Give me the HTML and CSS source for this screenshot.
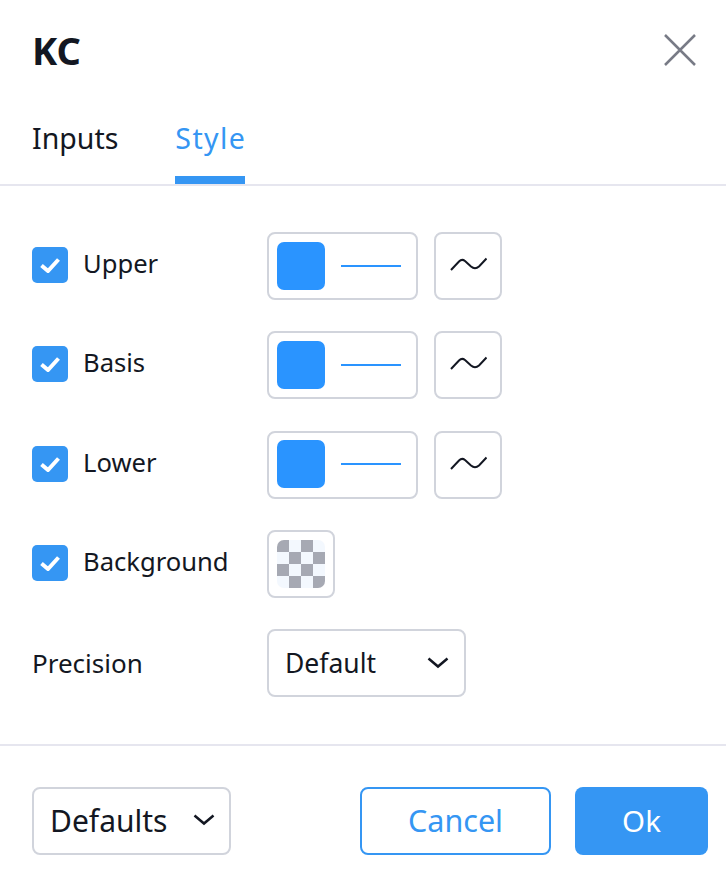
FILE: index.html
```html
<!DOCTYPE html>
<html lang="en">
  <head>
    <meta charset="UTF-8" />
    <meta name="viewport" content="width=device-width, initial-scale=1.0" />
    <title>KC</title>
    <link rel="stylesheet" href="styles.css">
  </head>

  <body>
    <div class="dialog">
      <div class="title-bar">
        <div class="title">KC</div>
        <svg class="close" width="34" height="34" viewBox="0 0 34 34">
          <path d="M2 2 L32 32 M32 2 L2 32" />
        </svg>
      </div>

      <div class="tabs">
        <div class="tab">Inputs</div>
        <div class="tab active">Style</div>
      </div>

      <div class="content">
        <div class="row">
          <div class="label-cell checked">
            <span class="checkbox"><svg width="20" height="16" viewBox="0 0 20 16"><path d="M1.500 8.500 L8 14 L18.500 2.500" /></svg></span>
            <span class="label">Upper</span>
          </div>
          <div class="swatch-button"><span class="color"></span><span class="line"></span></div>
          <div class="plot-button"><svg width="38" height="20" viewBox="0 0 38 20"><path d="M2 14 L10 5.500 Q13 2.500 16 5 L22 10.500 Q26 14 30 10.500 L37.500 2.500" /></svg></div>
        </div>
        <div class="row">
          <div class="label-cell checked">
            <span class="checkbox"><svg width="20" height="16" viewBox="0 0 20 16"><path d="M1.500 8.500 L8 14 L18.500 2.500" /></svg></span>
            <span class="label">Basis</span>
          </div>
          <div class="swatch-button"><span class="color"></span><span class="line"></span></div>
          <div class="plot-button"><svg width="38" height="20" viewBox="0 0 38 20"><path d="M2 14 L10 5.500 Q13 2.500 16 5 L22 10.500 Q26 14 30 10.500 L37.500 2.500" /></svg></div>
        </div>
        <div class="row">
          <div class="label-cell checked">
            <span class="checkbox"><svg width="20" height="16" viewBox="0 0 20 16"><path d="M1.500 8.500 L8 14 L18.500 2.500" /></svg></span>
            <span class="label">Lower</span>
          </div>
          <div class="swatch-button"><span class="color"></span><span class="line"></span></div>
          <div class="plot-button"><svg width="38" height="20" viewBox="0 0 38 20"><path d="M2 14 L10 5.500 Q13 2.500 16 5 L22 10.500 Q26 14 30 10.500 L37.500 2.500" /></svg></div>
        </div>
        <div class="row">
          <div class="label-cell checked">
            <span class="checkbox"><svg width="20" height="16" viewBox="0 0 20 16"><path d="M1.500 8.500 L8 14 L18.500 2.500" /></svg></span>
            <span class="label">Background</span>
          </div>
          <div class="plot-button"><span class="checker"></span></div>
        </div>
        <div class="row">
          <div class="label-cell">Precision</div>
          <div class="select precision">
            <span>Default</span>
            <svg class="chevron" width="22" height="12" viewBox="0 0 22 12"><path d="M1.500 1.500 L11 9.500 L20.500 1.500" /></svg>
          </div>
        </div>
      </div>

      <div class="footer">
        <div class="select defaults">
          <span>Defaults</span>
          <svg class="chevron" width="22" height="12" viewBox="0 0 22 12"><path d="M1.500 1.500 L11 9.500 L20.500 1.500" /></svg>
        </div>
        <div class="actions">
          <div class="btn cancel">Cancel</div>
          <div class="btn ok">Ok</div>
        </div>
      </div>
    </div>
  </body>
</html>
```

FILE: styles.css
```css
body {
  margin: 0;
  background: #fff;
  font-family: "Noto Sans", "Open Sans", sans-serif;
  font-size: 26px;
  color: #131722;
}

.dialog {
  width: 726px;
  height: 876px;
  overflow: hidden;
}

.title-bar {
  display: flex;
  justify-content: space-between;
  align-items: center;
  height: 100px;
  padding: 0 29px 0 32px;
}

.title {
  font-size: 38px;
  font-weight: 700;
}

.close path {
  stroke: #787b86;
  stroke-width: 2.500;
  fill: none;
}

.tabs {
  display: flex;
  gap: 57px;
  height: 84px;
  padding-left: 32px;
  border-bottom: 2px solid #e6e6ef;
}

.tab {
  font-size: 28.500px;
  height: 84px;
  padding-top: 19px;
  box-sizing: border-box;
}

.tab.active {
  width: 70px;
  letter-spacing: 1.400px;
  white-space: nowrap;
  color: #3596f3;
  border-bottom: 8px solid #3596f3;
}

.content {
  display: flex;
  flex-direction: column;
  gap: 31.300px;
  height: 560px;
  padding: 46px 0 0 32px;
  box-sizing: border-box;
  border-bottom: 2px solid #e6e6ef;
}

.row {
  display: flex;
  align-items: center;
  gap: 16px;
  height: 68px;
}

.label-cell {
  display: flex;
  align-items: center;
  gap: 15px;
  width: 219px;
}

.label-cell.checked {
  margin-bottom: 2px;
  font-size: 25.600px;
}

.label {
  padding-bottom: 3px;
}

.checkbox {
  display: flex;
  align-items: center;
  justify-content: center;
  width: 36px;
  height: 36px;
  border-radius: 5px;
  background: #3596f3;
}

.checkbox path {
  stroke: #fff;
  stroke-width: 4;
  fill: none;
}

.swatch-button,
.plot-button,
.select {
  display: flex;
  align-items: center;
  box-sizing: border-box;
  height: 68px;
  background: #fff;
  border: 2px solid #d1d4dc;
  border-radius: 8px;
}

.swatch-button {
  width: 151px;
  padding: 0 0 1px 8px;
  gap: 16px;
}

.color {
  width: 48px;
  height: 48px;
  border-radius: 7px;
  background: #2a94ff;
}

.line {
  width: 60px;
  height: 2px;
  background: #2a94ff;
}

.plot-button {
  justify-content: center;
  width: 68px;
}

.plot-button path {
  stroke: #131722;
  stroke-width: 2;
  fill: none;
}

.checker {
  width: 48px;
  height: 48px;
  border-radius: 7px;
  background-color: #f3f8fe;
  background-image: conic-gradient(transparent 25%, #a6a9b3 0 50%, transparent 0 75%, #a6a9b3 0);
  background-size: 24px 24px;
}

.select {
  justify-content: space-between;
}

.chevron path {
  stroke: #131722;
  stroke-width: 2.500;
  fill: none;
}

.precision {
  width: 199px;
  padding: 0 15px 0 16px;
  font-size: 26.500px;
}

.footer {
  display: flex;
  justify-content: space-between;
  align-items: center;
  padding: 41px 18px 0 32px;
}

.defaults {
  width: 199px;
  padding: 0 14px 2px 16px;
  font-size: 30px;
}

.actions {
  display: flex;
  gap: 24px;
}

.btn {
  display: flex;
  align-items: center;
  justify-content: center;
  box-sizing: border-box;
  height: 68px;
  padding-bottom: 2px;
  border-radius: 8px;
}

.cancel {
  width: 191px;
  font-size: 30.500px;
  color: #3596f3;
  border: 2px solid #3596f3;
}

.ok {
  width: 133px;
  font-size: 29.500px;
  color: #fff;
  background: #3596f3;
}
```
